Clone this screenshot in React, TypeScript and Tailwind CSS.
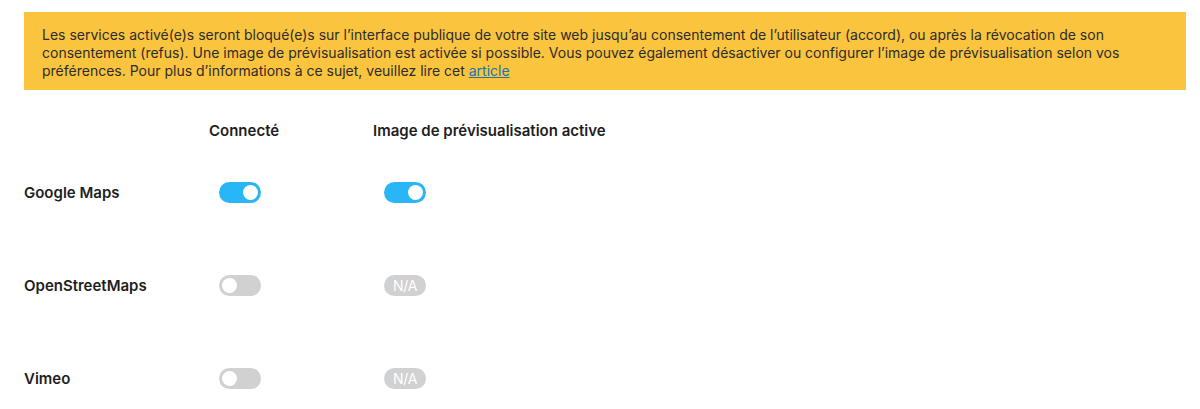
import React from 'react';

interface Service {
    name: string;
    connected: boolean;
    preview: boolean | null;
}

const services: Service[] = [
    { name: 'Google Maps', connected: true, preview: true },
    { name: 'OpenStreetMaps', connected: false, preview: null },
    { name: 'Vimeo', connected: false, preview: null },
];

const Toggle = ({ on }: { on: boolean }) => (
    <div
        className={
            on
                ? 'w-[42px] h-[21px] rounded-full bg-[#29b6f6] flex items-center justify-end pr-[3px]'
                : 'w-[42px] h-[21px] rounded-full bg-[#d1d1d1] flex items-center justify-start pl-[3px]'
        }
    >
        <div className="w-[15px] h-[15px] rounded-full bg-white" />
    </div>
);

const NotAvailable = () => (
    <div className="w-[42px] h-[21px] rounded-full bg-[#d1d1d1] flex items-center justify-center text-white text-[14px] font-normal tracking-[-0.3px]">
        N/A
    </div>
);

export default function App() {
    return (
        <div className="w-[1200px] h-[409px] bg-white pt-3 px-6 font-['Inter','Roboto',sans-serif] text-[#1e1e1e] overflow-hidden">
            <div className="bg-[#fbc43e] w-[1162px] h-[78px] pl-[18px] pr-4 pt-[14px] text-[14px] leading-[18px] text-[#2c2c2c]">
                Les services activé(e)s seront bloqué(e)s sur l’interface publique de votre site web jusqu’au consentement de l’utilisateur (accord), ou après la révocation de son consentement (refus). Une image de prévisualisation est activée si possible. Vous pouvez également désactiver ou configurer l’image de prévisualisation selon vos préférences. Pour plus d’informations à ce sujet, veuillez lire cet{' '}
                <a href="#" className="text-[#2271b1] underline">article</a>
            </div>

            <div className="grid grid-cols-[195px_165px_1fr] mt-[30px] text-[15px] font-semibold">
                <div />
                <div className="-ml-[10px]">Connecté</div>
                <div className="-ml-[11px]">Image de prévisualisation active</div>
            </div>

            <div className="mt-[39px] flex flex-col gap-[72px]">
                {services.map((s) => (
                    <div key={s.name} className="grid grid-cols-[195px_165px_1fr] items-center h-[21px]">
                        <div className="text-[15px] font-semibold">{s.name}</div>
                        <Toggle on={s.connected} />
                        {s.preview === null ? <NotAvailable /> : <Toggle on={s.preview} />}
                    </div>
                ))}
            </div>
        </div>
    );
}
